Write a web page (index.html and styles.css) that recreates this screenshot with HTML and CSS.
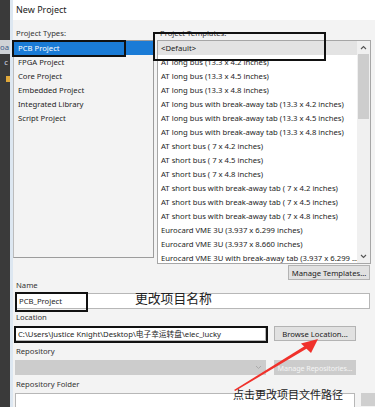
FILE: index.html
```html
<!DOCTYPE html>
<html lang="en">
<head>
    <meta charset="UTF-8">
    <meta name="viewport" content="width=device-width, initial-scale=1.0">
    <title>New Project</title>
    <link rel="stylesheet" href="styles.css">
</head>
<body>
    <div class="screen">
        <div class="desk">
            <div class="desk-tab">oa</div>
            <div class="desk-c">c</div>
            <div class="desk-icon"></div>
        </div>
        <div class="frame"></div>
        <div class="dialog">
            <div class="title">New Project</div>
            <div class="content">
                <div class="pickers">
                    <div class="types">
                        <div class="label">Project Types:</div>
                        <ul class="types-list">
                            <li class="sel">PCB Project</li>
                            <li>FPGA Project</li>
                            <li>Core Project</li>
                            <li>Embedded Project</li>
                            <li>Integrated Library</li>
                            <li>Script Project</li>
                        </ul>
                    </div>
                    <div class="templates">
                        <div class="label">Project Templates:</div>
                        <div class="tpl-box">
                            <ul class="tpl-list">
                                <li class="cur">&lt;Default&gt;</li>
                                <li>AT long bus (13.3 x 4.2 inches)</li>
                                <li>AT long bus (13.3 x 4.5 inches)</li>
                                <li>AT long bus (13.3 x 4.8 inches)</li>
                                <li>AT long bus with break-away tab (13.3 x 4.2 inches)</li>
                                <li>AT long bus with break-away tab (13.3 x 4.5 inches)</li>
                                <li>AT long bus with break-away tab (13.3 x 4.8 inches)</li>
                                <li>AT short bus ( 7 x 4.2 inches)</li>
                                <li>AT short bus ( 7 x 4.5 inches)</li>
                                <li>AT short bus ( 7 x 4.8 inches)</li>
                                <li>AT short bus with break-away tab ( 7 x 4.2 inches)</li>
                                <li>AT short bus with break-away tab ( 7 x 4.5 inches)</li>
                                <li>AT short bus with break-away tab ( 7 x 4.8 inches)</li>
                                <li>Eurocard VME 3U (3.937 x 6.299 inches)</li>
                                <li>Eurocard VME 3U (3.937 x 8.660 inches)</li>
                                <li>Eurocard VME 3U with break-away tab (3.937 x 6.299 ...</li>
                            </ul>
                            <div class="scroll">
                                <svg class="arr" width="13" height="13" viewBox="0 0 13 13"><path d="M4 8 L6.5 5.5 L9 8" fill="none" stroke="#555" stroke-width="1.1"/></svg>
                                <div class="thumb"></div>
                                <div class="track"></div>
                                <svg class="arr" width="13" height="13" viewBox="0 0 13 13"><path d="M4 5 L6.5 7.5 L9 5" fill="none" stroke="#555" stroke-width="1.1"/></svg>
                            </div>
                        </div>
                    </div>
                </div>

                <div class="row row-end">
                    <button class="btn">Manage Templates...</button>
                </div>

                <div class="label field-label">Name</div>
                <div class="input input-full">PCB_Project</div>

                <div class="label field-label gap3">Location</div>
                <div class="row gap3">
                    <div class="input input-half path">C:\Users\Justice Knight\Desktop\电子幸运转盘\elec_lucky</div>
                    <button class="btn">Browse Location...</button>
                </div>

                <div class="label field-label gap5">Repository</div>
                <div class="row gap3">
                    <div class="combo">
                        <svg width="9" height="9" viewBox="0 0 9 9"><path d="M2 3 L4.5 5.5 L7 3" fill="none" stroke="#aaa" stroke-width="1"/></svg>
                    </div>
                    <button class="btn btn-off">Manage Repositories...</button>
                </div>

                <div class="label field-label gap4">Repository Folder</div>
                <div class="row gap3">
                    <div class="input input-folder"></div>
                    <div class="btn-stub"></div>
                </div>
            </div>
        </div>
    </div>

    <!-- screenshot markup drawn on top -->
    <div class="mark mark-pcb"></div>
    <div class="mark mark-default"></div>
    <div class="mark mark-name"></div>
    <div class="mark mark-location"></div>
    <div class="note note-name">更改项目名称</div>
    <div class="note note-path">点击更改项目文件路径</div>
    <svg class="arrow" width="375" height="407" viewBox="0 0 375 407">
        <polygon points="234,390 235.2,391 308.5,347.5 306.8,344.8" fill="#f0312b"/>
        <polygon points="318,339 301,343.5 311,353" fill="#f0312b"/>
    </svg>
</body>
</html>
```

FILE: styles.css
```css
* { box-sizing: border-box; }
html, body { margin: 0; padding: 0; }
body {
    width: 375px;
    height: 407px;
    overflow: hidden;
    position: relative;
    font-family: "Noto Sans", "Open Sans", sans-serif;
    font-size: 7.7px;
    color: #1e1e1e;
    background: #f3f3f3;
}
ul { list-style: none; margin: 0; padding: 0; }

.screen { display: flex; height: 407px; }

.desk { width: 10px; background: #3a3a3a; padding-top: 40px; flex-shrink: 0; }
.desk-tab {
    height: 14px;
    background: #cfd2d6;
    color: #3a5a8a;
    line-height: 14px;
    text-align: right;
    padding-right: 1px;
    overflow: hidden;
}
.desk-c { color: #cfd8e4; line-height: 12px; text-align: right; padding-right: 2px; margin-top: 2px; }
.desk-icon { width: 4px; height: 6px; background: #e0a83a; margin: 8px 0 0 6px; }

.frame { width: 3px; background: #dde7f1; flex-shrink: 0; }

.dialog { flex: 1; display: flex; flex-direction: column; }
.title {
    height: 20px;
    background: #fff;
    line-height: 20px;
    padding-left: 3px;
    font-size: 9px;
    color: #222;
}
.content { flex: 1; padding-top: 7px; }

.label { height: 13px; line-height: 12px; padding-left: 3px; color: #333; }

.pickers { display: flex; }
.types { width: 141px; }
.types-list {
    height: 218px;
    border: 1px solid #9c9c9c;
    border-left-color: #bcbcbc;
    background: #f3f3f3;
}
.types-list li { height: 14px; line-height: 14px; padding-left: 4px; }
.types-list .sel { background: #1a7bd6; color: #fff; }

.templates { margin-left: 3px; width: 214px; }
.tpl-box {
    display: flex;
    height: 224px;
    border: 1px solid #a6a6a6;
    background: #fff;
}
.tpl-list { flex: 1; overflow: hidden; }
.tpl-list li { height: 14px; line-height: 14px; padding-left: 3px; white-space: nowrap; overflow: hidden; }
.tpl-list .cur { background: #e3e3e3; }

.scroll { width: 13px; display: flex; flex-direction: column; background: #f0f0f0; }
.scroll .arr { display: block; height: 13px; flex-shrink: 0; }
.thumb { height: 65px; background: #cdcdcd; margin: 0 1px; }
.track { flex: 1; }

.row { display: flex; align-items: flex-start; }
.row-end { justify-content: flex-end; padding-right: 5px; margin-top: 1px; }
.field-label { height: 11px; line-height: 11px; }
.gap3 { margin-top: 3px; }
.gap4 { margin-top: 4px; }
.gap5 { margin-top: 5px; }

.btn {
    width: 82px;
    height: 16px;
    padding: 0;
    border: 1px solid #b3b3b3;
    background: #e1e1e1;
    font-family: inherit;
    font-size: 7.7px;
    color: #222;
    white-space: nowrap;
    overflow: hidden;
}
.btn-off {
    background: #cccccc;
    border-color: #cccccc;
    color: #f4f4f4;
    font-size: 7.2px;
    letter-spacing: -0.1px;
}
.btn-stub { width: 14px; height: 13px; background: #cfcfcf; margin-left: auto; }

.input {
    height: 16px;
    line-height: 14px;
    border: 1px solid #b7b7b7;
    background: #fff;
    padding-left: 3px;
    margin-top: 2px;
    margin-left: 2px;
    white-space: nowrap;
    overflow: hidden;
}
.input-full { width: 355px; }
.input-half { width: 252px; height: 15px; margin: 0 8px 0 1px; }
.path { font-family: "Noto Sans", "Noto Sans CJK SC", sans-serif; }
.row .btn { height: 15px; }
.input-folder { width: 340px; height: 16px; margin: 0 0 0 2px; }

.combo {
    width: 251px;
    height: 15px;
    background: #cccccc;
    margin: 0 8px 0 2px;
    display: flex;
    justify-content: flex-end;
    align-items: center;
    padding-right: 3px;
}
.combo svg { display: block; }

.mark { position: absolute; border: 2px solid #111; }
.mark-pcb { left: 12px; top: 40px; width: 114px; height: 17px; }
.mark-default { left: 153px; top: 32px; width: 173px; height: 29px; }
.mark-name { left: 15px; top: 292px; width: 73px; height: 20px; }
.mark-location { left: 14px; top: 326px; width: 254px; height: 17px; }

.note {
    position: absolute;
    font-family: "Noto Sans CJK SC", sans-serif;
    color: #222;
    white-space: nowrap;
}
.note-name { left: 135px; top: 290px; font-size: 12.8px; line-height: 16px; }
.note-path { left: 233px; top: 387px; font-size: 11px; line-height: 14px; }

.arrow { position: absolute; left: 0; top: 0; pointer-events: none; }
```
